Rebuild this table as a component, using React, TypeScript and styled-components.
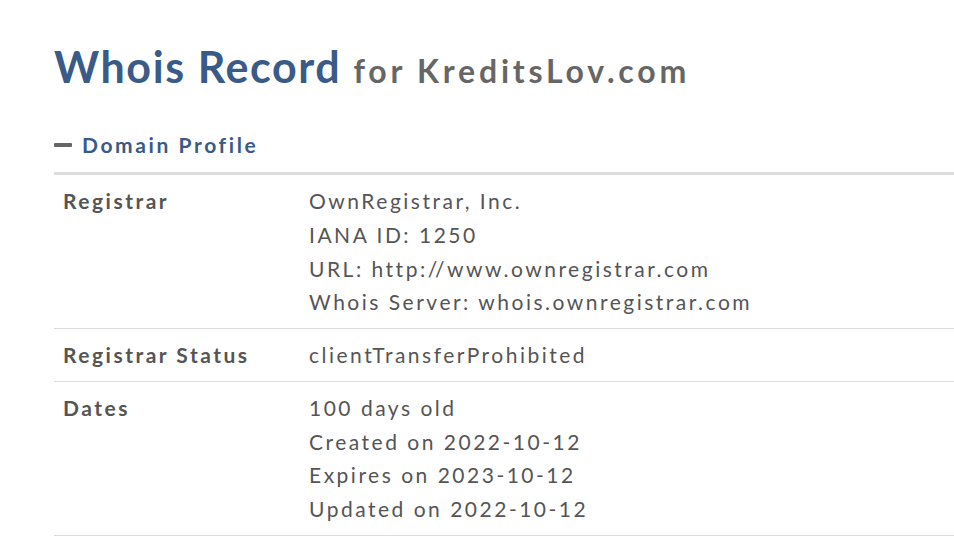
import React from "react";
import styled, { createGlobalStyle } from "styled-components";

const Global = createGlobalStyle`
  html, body { margin: 0; padding: 0; background: #fff; }
  body { font-family: Lato, "Open Sans", sans-serif; -webkit-font-smoothing: antialiased; }
`;

const Page = styled.div`
  padding: 37px 0 0 54px;
`;

const Title = styled.h1`
  margin: 0;
  font-size: 43px;
  font-weight: 700;
  color: #3a5a88;
  line-height: 60px;
  letter-spacing: 1.6px;
  white-space: nowrap;
`;

const Sub = styled.span`
  font-size: 32px;
  color: #666;
  letter-spacing: 3.8px;
`;

const SectionHead = styled.div`
  margin-top: 29px;
  display: flex;
  align-items: center;
  gap: 10px;
  height: 30px;
  padding-bottom: 12px;
  border-bottom: 3px solid #ddd;
`;

const Minus = styled.span`
  width: 18px;
  height: 4px;
  background: #666;
  border-radius: 1px;
`;

const SectionTitle = styled.span`
  font-size: 21px;
  line-height: 30px;
  font-weight: 700;
  color: #3a5a88;
  letter-spacing: 2.6px;
`;

const Row = styled.div`
  display: grid;
  grid-template-columns: 246px 1fr;
  padding: 9px 0 9px 9px;
  border-bottom: 1px solid #ddd;
  font-size: 21px;
  line-height: 33.75px;
  letter-spacing: 2.5px;
  color: #555;
`;

const Label = styled.div`
  font-weight: 700;
  color: #555;
`;

const Value = styled.div`
  color: #555;
`;

const rows: { label: string; values: string[] }[] = [
  {
    label: "Registrar",
    values: [
      "OwnRegistrar, Inc.",
      "IANA ID: 1250",
      "URL: http://www.ownregistrar.com",
      "Whois Server: whois.ownregistrar.com",
    ],
  },
  { label: "Registrar Status", values: ["clientTransferProhibited"] },
  {
    label: "Dates",
    values: [
      "100 days old",
      "Created on 2022-10-12",
      "Expires on 2023-10-12",
      "Updated on 2022-10-12",
    ],
  },
];

export default function App() {
  return (
    <>
      <Global />
      <Page>
        <Title>
          Whois Record <Sub>for KreditsLov.com</Sub>
        </Title>
        <SectionHead>
          <Minus />
          <SectionTitle>Domain Profile</SectionTitle>
        </SectionHead>
        {rows.map((r) => (
          <Row key={r.label}>
            <Label>{r.label}</Label>
            <Value>
              {r.values.map((v) => (
                <div key={v}>{v}</div>
              ))}
            </Value>
          </Row>
        ))}
      </Page>
    </>
  );
}
